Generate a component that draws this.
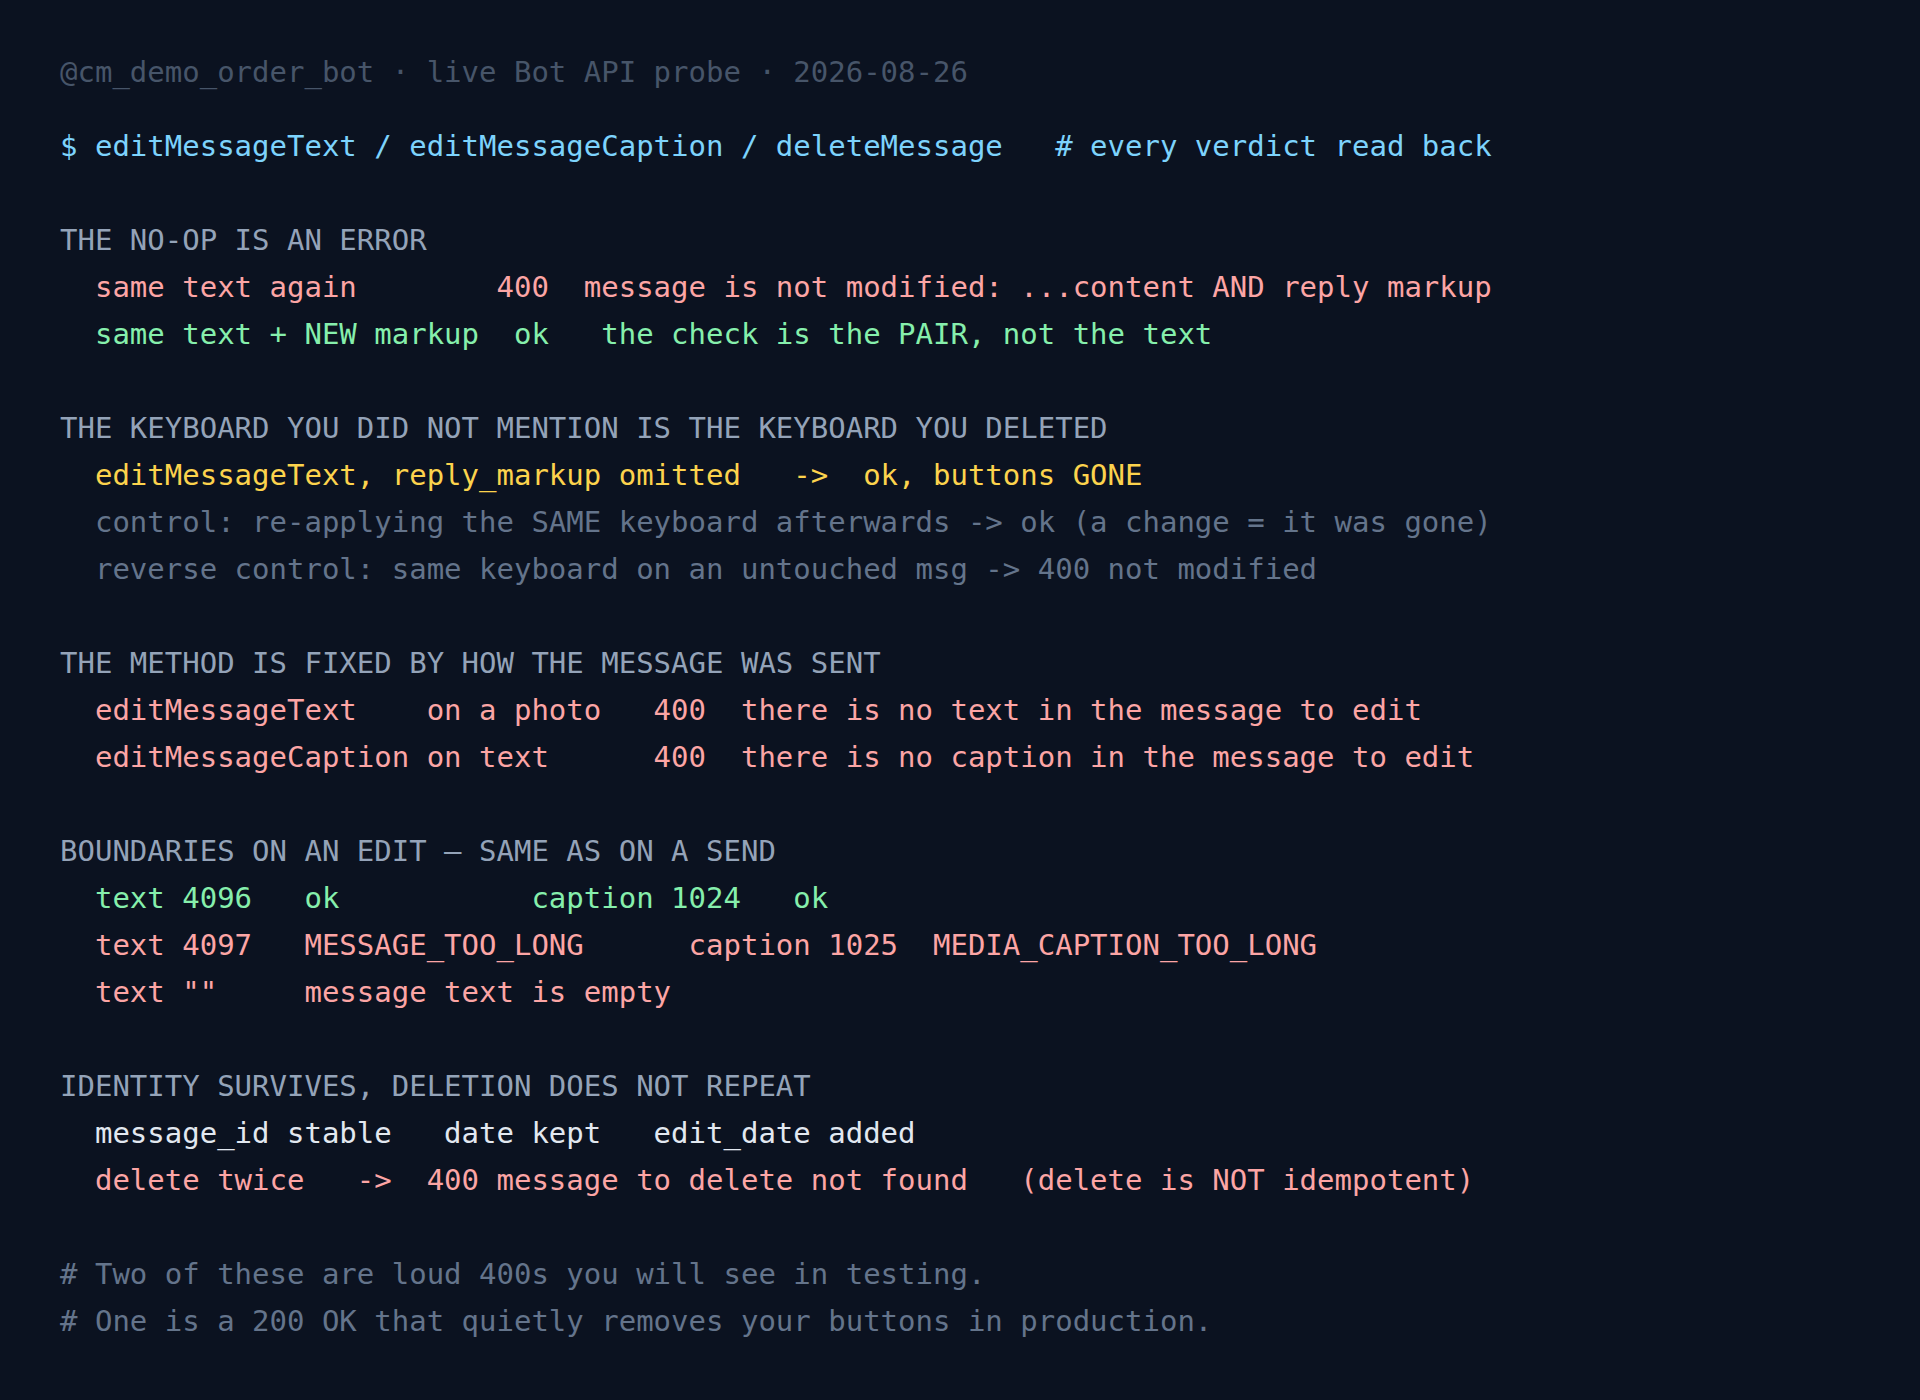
import React from 'react';

const colors = {
  head: 'text-[#94a3b8]',
  red: 'text-[#fca5a5]',
  green: 'text-[#86efac]',
  yellow: 'text-[#fcd34d]',
  dim: 'text-[#64748b]',
  white: 'text-[#e2e8f0]',
};

const sections = [
  {
    title: 'THE NO-OP IS AN ERROR',
    rows: [
      ['red', '  same text again        400  message is not modified: ...content AND reply markup'],
      ['green', '  same text + NEW markup  ok   the check is the PAIR, not the text'],
    ],
  },
  {
    title: 'THE KEYBOARD YOU DID NOT MENTION IS THE KEYBOARD YOU DELETED',
    rows: [
      ['yellow', '  editMessageText, reply_markup omitted   ->  ok, buttons GONE'],
      ['dim', '  control: re-applying the SAME keyboard afterwards -> ok (a change = it was gone)'],
      ['dim', '  reverse control: same keyboard on an untouched msg -> 400 not modified'],
    ],
  },
  {
    title: 'THE METHOD IS FIXED BY HOW THE MESSAGE WAS SENT',
    rows: [
      ['red', '  editMessageText    on a photo   400  there is no text in the message to edit'],
      ['red', '  editMessageCaption on text      400  there is no caption in the message to edit'],
    ],
  },
  {
    title: 'BOUNDARIES ON AN EDIT \u2014 SAME AS ON A SEND',
    rows: [
      ['green', '  text 4096   ok           caption 1024   ok'],
      ['red', '  text 4097   MESSAGE_TOO_LONG      caption 1025  MEDIA_CAPTION_TOO_LONG'],
      ['red', '  text ""     message text is empty'],
    ],
  },
  {
    title: 'IDENTITY SURVIVES, DELETION DOES NOT REPEAT',
    rows: [
      ['white', '  message_id stable   date kept   edit_date added'],
      ['red', '  delete twice   ->  400 message to delete not found   (delete is NOT idempotent)'],
    ],
  },
];

export default function App() {
  return (
    <div
      className="min-h-[1400px] bg-[#0b1220] px-[60px] pt-[49px] text-[29px] leading-[47px] whitespace-pre"
      style={{ fontFamily: '"DejaVu Sans Mono", "Liberation Mono", monospace' }}
    >
      <div className="text-[#475569] mb-[27px]">@cm_demo_order_bot · live Bot API probe · 2026-08-26</div>
      <div className="text-[#7dd3fc]">$ editMessageText / editMessageCaption / deleteMessage   # every verdict read back</div>
      <div>&nbsp;</div>

      {sections.map((s) => (
        <div key={s.title}>
          <div className={colors.head}>{s.title}</div>
          {s.rows.map(([c, text]) => (
            <div key={text} className={colors[c]}>{text}</div>
          ))}
          <div>&nbsp;</div>
        </div>
      ))}

      {/* closing note */}
      <div className="text-[#64748b]"># Two of these are loud 400s you will see in testing.</div>
      <div className="text-[#64748b]"># One is a 200 OK that quietly removes your buttons in production.</div>
    </div>
  );
}
